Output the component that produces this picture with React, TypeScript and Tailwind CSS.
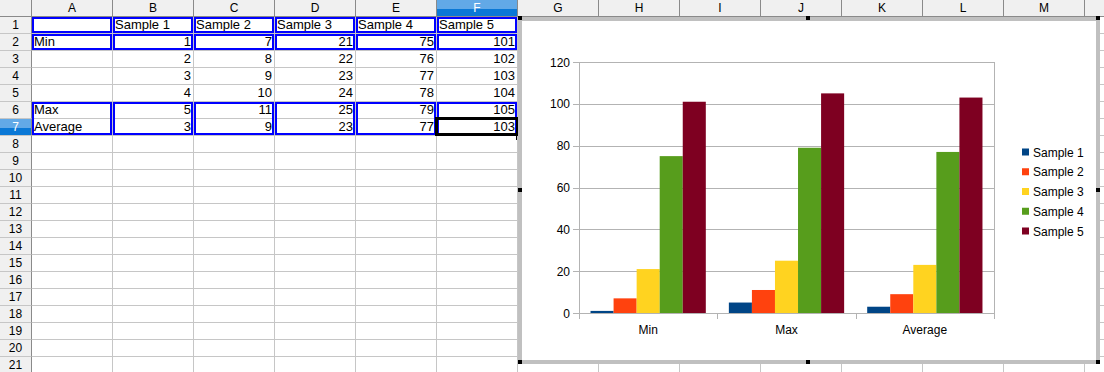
import React from 'react';

const COLS = ['A', 'B', 'C', 'D', 'E', 'F', 'G', 'H', 'I', 'J', 'K', 'L', 'M', 'N'];

const DATA: (string | number)[][] = [
  ['', 'Sample 1', 'Sample 2', 'Sample 3', 'Sample 4', 'Sample 5'],
  ['Min', 1, 7, 21, 75, 101],
  ['', 2, 8, 22, 76, 102],
  ['', 3, 9, 23, 77, 103],
  ['', 4, 10, 24, 78, 104],
  ['Max', 5, 11, 25, 79, 105],
  ['Average', 3, 9, 23, 77, 103],
];

const SERIES = [
  { name: 'Sample 1', color: '#004586' },
  { name: 'Sample 2', color: '#ff420e' },
  { name: 'Sample 3', color: '#ffd320' },
  { name: 'Sample 4', color: '#579d1c' },
  { name: 'Sample 5', color: '#7e0021' },
];

const CATEGORIES = [
  { label: 'Min', values: [1, 7, 21, 75, 101] },
  { label: 'Max', values: [5, 11, 25, 79, 105] },
  { label: 'Average', values: [3, 9, 23, 77, 103] },
];

// plot area in page coordinates
const X0 = 579;
const X1 = 994;
const Y0 = 313;
const Y1 = 62;
const yOf = (v: number) => Y0 - (v * (Y0 - Y1)) / 120;
const catW = (X1 - X0) / 3;
const barW = catW / 6;

function Chart() {
  return (
    <svg width={574} height={339} viewBox="522 21 574 339" className="block">
      {[0, 20, 40, 60, 80, 100, 120].map((v) => (
        <g key={v}>
          <line x1={573} x2={X1} y1={Math.round(yOf(v)) + 0.5} y2={Math.round(yOf(v)) + 0.5} stroke="#b3b3b3" />
          <text x={570} y={yOf(v) + 4.5} textAnchor="end" fontSize={12} fill="#000">
            {v}
          </text>
        </g>
      ))}
      {[0, 1, 2, 3].map((i) => (
        <line
          key={i}
          x1={Math.round(X0 + i * catW) + 0.5}
          x2={Math.round(X0 + i * catW) + 0.5}
          y1={i === 0 || i === 3 ? Y1 : Y0}
          y2={319}
          stroke="#b3b3b3"
        />
      ))}
      {CATEGORIES.map((c, ci) => (
        <g key={c.label}>
          {c.values.map((v, si) => (
            <rect
              key={si}
              x={X0 + ci * catW + barW / 2 + si * barW}
              y={yOf(v)}
              width={barW}
              height={Y0 - yOf(v)}
              fill={SERIES[si].color}
            />
          ))}
          <text x={X0 + (ci + 0.5) * catW} y={334} textAnchor="middle" fontSize={12} fill="#000">
            {c.label}
          </text>
        </g>
      ))}
      {SERIES.map((s, i) => (
        <g key={s.name}>
          <rect x={1022} y={148.5 + i * 19.75} width={7} height={7} fill={s.color} />
          <text x={1033} y={156.5 + i * 19.75} fontSize={12} fill="#000">
            {s.name}
          </text>
        </g>
      ))}
    </svg>
  );
}

const HANDLES = [
  'left-[518px] top-[16px]',
  'left-[806px] top-[16px]',
  'left-[1096px] top-[16px]',
  'left-[518px] top-[188px]',
  'left-[1096px] top-[188px]',
  'left-[518px] top-[360px]',
  'left-[806px] top-[360px]',
  'left-[1096px] top-[360px]',
];

export default function App() {
  return (
    <div className="relative w-[1104px] h-[372px] overflow-hidden bg-white font-['Liberation_Sans',Arial,sans-serif] text-black">
      <div className="grid grid-cols-[32px_repeat(14,81px)] auto-rows-[17px]">
        <div className="bg-[#f0f0f0] border-r border-b border-[#8a8a8a]" />
        {COLS.map((c) => (
          <div
            key={c}
            className={
              c === 'F'
                ? 'bg-linear-to-b from-[#62a9e7] from-55% to-[#0a78d6] to-55% text-white border-r border-b border-[#8a8a8a] text-center text-[12px] leading-[16px]'
                : 'bg-[#f0f0f0] border-r border-b border-[#8a8a8a] text-center text-[12px] leading-[16px]'
            }
          >
            {/* the last column's letter sits past the window edge */}
            {c === 'N' ? null : c}
          </div>
        ))}
        {Array.from({ length: 21 }, (_, r) => (
          <React.Fragment key={r}>
            <div
              className={
                r === 6
                  ? 'bg-linear-to-b from-[#62a9e7] from-55% to-[#0a78d6] to-55% text-white border-r border-[#8a8a8a] border-b border-b-[#c6c6c6] text-center text-[12px] leading-[16px]'
                  : 'bg-[#f0f0f0] border-r border-[#8a8a8a] border-b border-b-[#c6c6c6] text-center text-[12px] leading-[16px]'
              }
            >
              {r + 1}
            </div>
            {COLS.map((c, ci) => {
              const v = DATA[r]?.[ci];
              const inRange = ci < 6 && (r === 0 || r === 1 || r === 5);
              return (
                <div
                  key={c}
                  className={
                    typeof v === 'number'
                      ? 'relative border-r border-b border-[#c6c6c6] px-[2px] text-right text-[13px] leading-[16px] whitespace-nowrap'
                      : 'relative border-r border-b border-[#c6c6c6] px-[2px] text-left text-[13px] leading-[16px] whitespace-nowrap'
                  }
                >
                  {v}
                  {inRange && (
                    <div
                      className={
                        r === 5
                          ? 'absolute left-0 top-0 right-0 h-[33px] border-2 border-[#0000ff]'
                          : 'absolute inset-0 border-2 border-[#0000ff]'
                      }
                    />
                  )}
                  {r === 6 && c === 'F' && (
                    <>
                      <div className="absolute -left-[2px] -top-[2px] w-[84px] h-[19px] border-[3px] border-black" />
                      <div className="absolute left-[79px] top-[16px] w-[3px] h-[5px] bg-black" />
                    </>
                  )}
                </div>
              );
            })}
          </React.Fragment>
        ))}
      </div>

      {/* embedded chart object */}
      <div className="absolute left-[518px] top-[17px] w-[582px] h-[347px] border-4 border-[#c0c0c0] bg-white">
        <Chart />
      </div>
      {HANDLES.map((h) => (
        <div key={h} className={'absolute w-[4px] h-[4px] bg-black ' + h} />
      ))}
    </div>
  );
}
